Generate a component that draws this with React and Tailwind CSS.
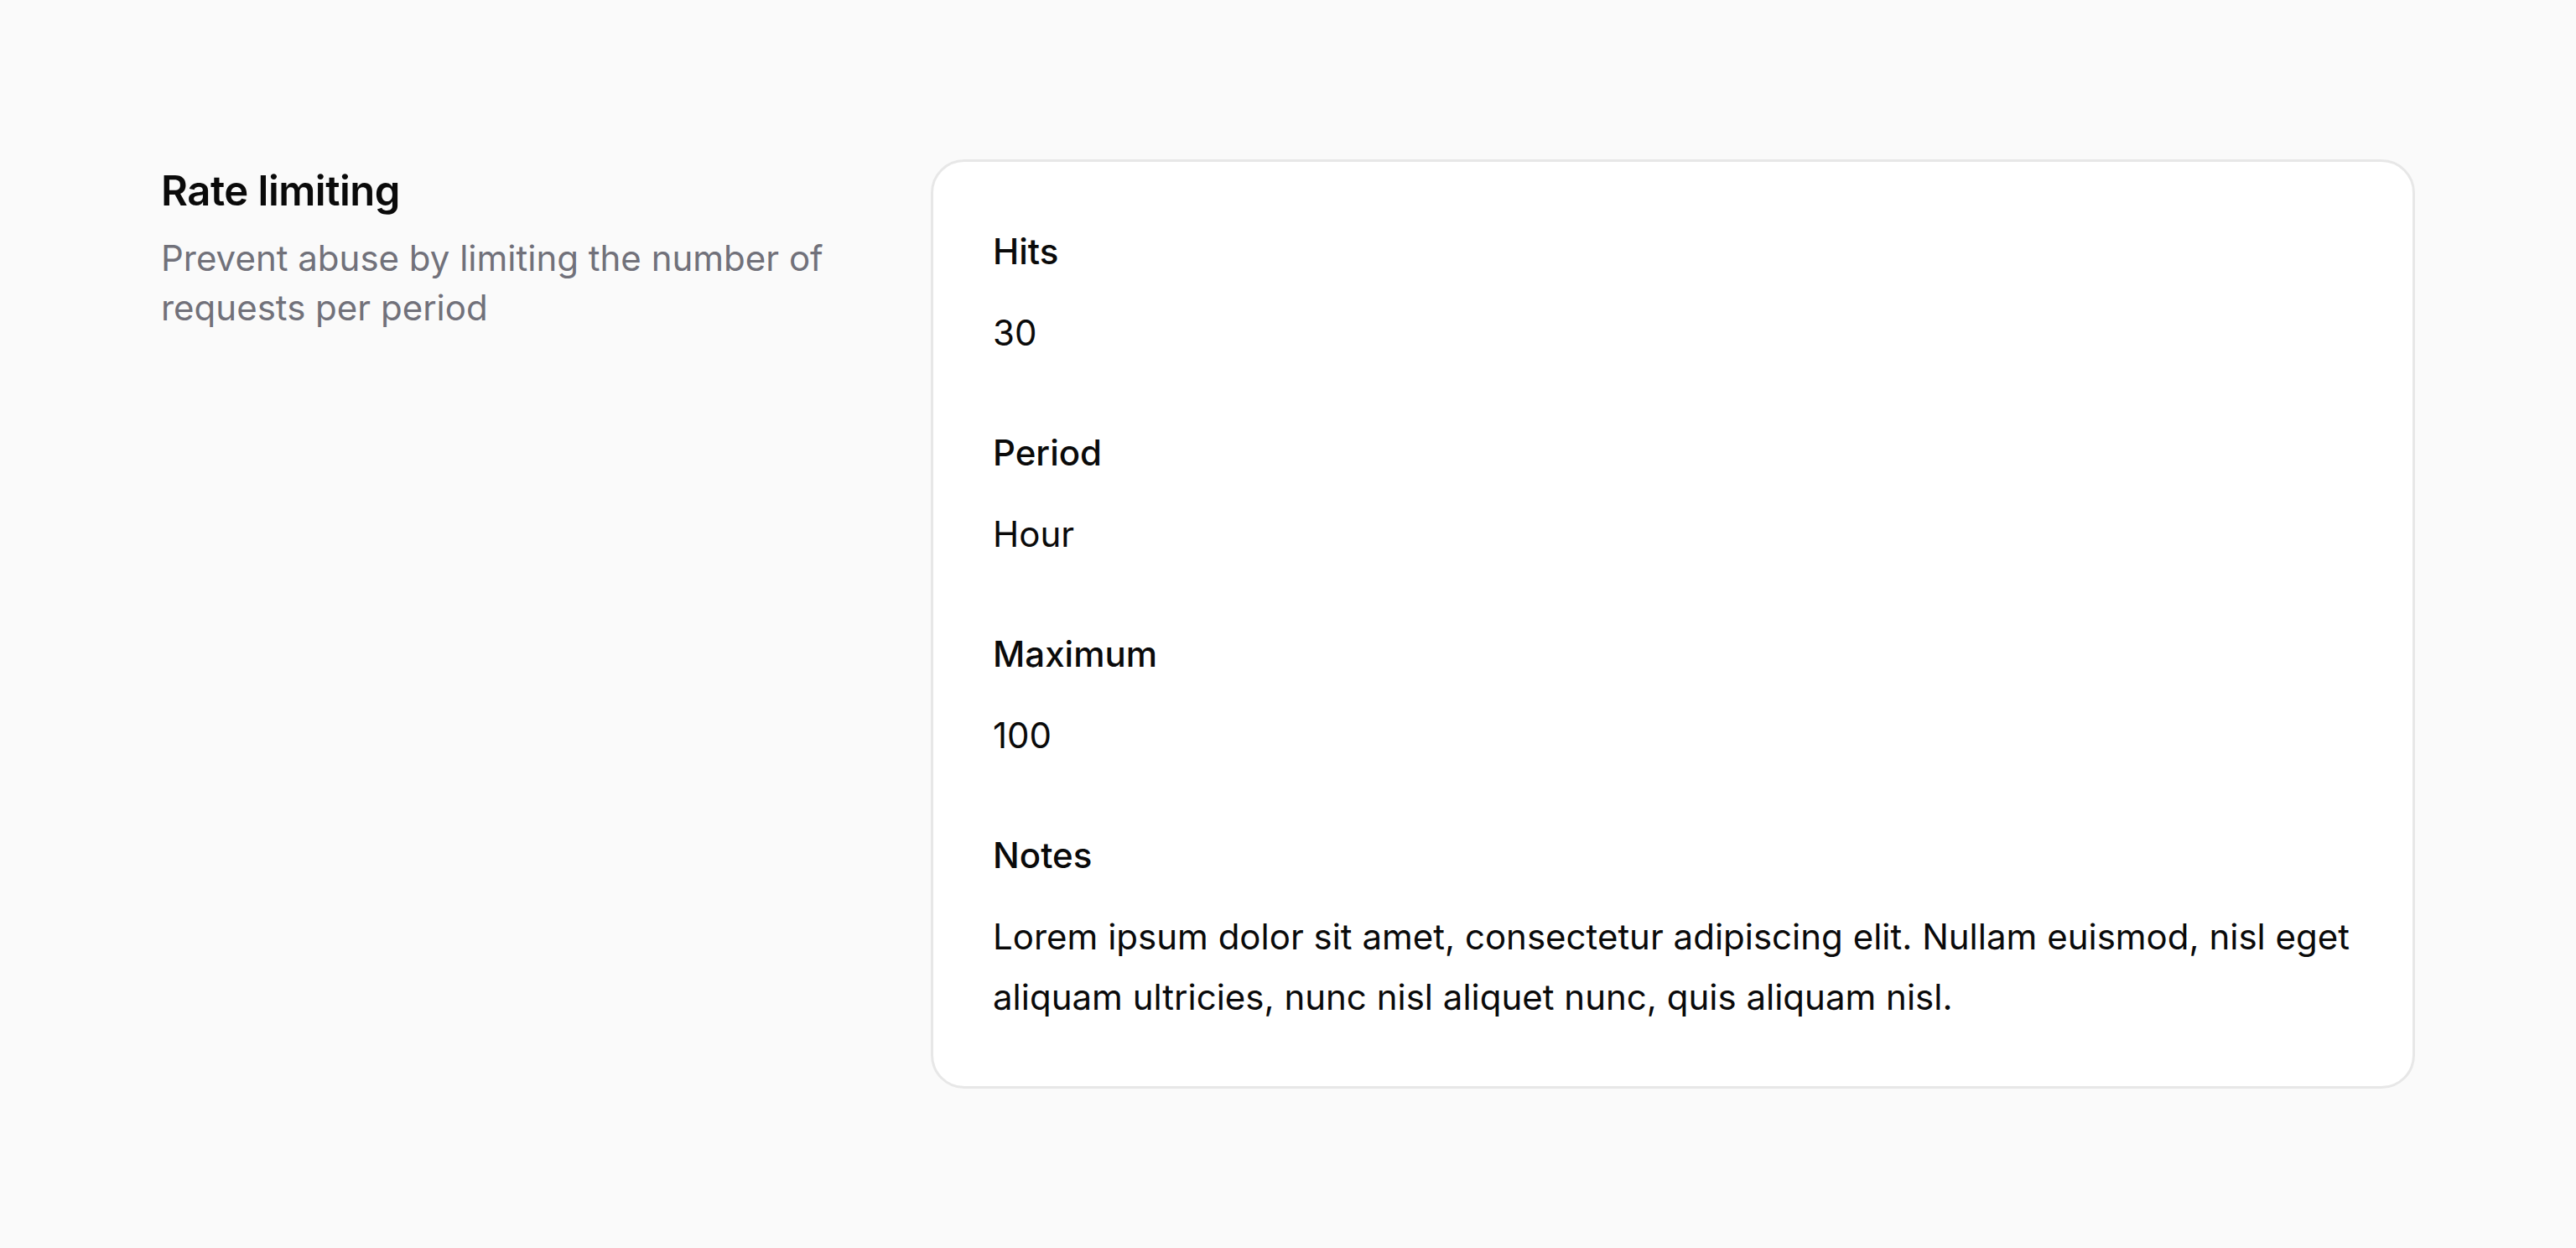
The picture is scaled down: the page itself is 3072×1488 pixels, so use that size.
export default function App() {
  const fields = [
    { label: 'Hits', value: '30' },
    { label: 'Period', value: 'Hour' },
    { label: 'Maximum', value: '100' },
    {
      label: 'Notes',
      value:
        'Lorem ipsum dolor sit amet, consectetur adipiscing elit. Nullam euismod, nisl eget aliquam ultricies, nunc nisl aliquet nunc, quis aliquam nisl.',
    },
  ];

  return (
    <div
      className="min-h-screen w-full bg-[#fafafa] text-[#0a0a0a]"
      style={{ fontFamily: 'Inter, "Noto Sans", sans-serif' }}
    >
      <div className="flex items-start pt-[190px] pl-[192px]">
        {/* Section heading */}
        <div className="w-[820px] shrink-0">
          <h2 className="pt-[2px] text-[49px] leading-[72px] font-semibold tracking-[-0.01em]">Rate limiting</h2>
          <p className="mt-[14px] text-[42px] leading-[59px] text-[#71717a]">
            Prevent abuse by limiting the number of requests per period
          </p>
        </div>

        {/* Card */}
        <div className="ml-[98px] w-[1770px] bg-white border-[3px] border-[#e7e7e7] rounded-[40px] pt-[75px] pb-[70px] pl-[71px] pr-[60px]">
          <div className="flex flex-col gap-[75px]">
            {fields.map((f) => (
              <div key={f.label}>
                <div className="text-[42px] leading-[64px] font-medium">{f.label}</div>
                <div className="mt-[29px] text-[42px] leading-[72px]">{f.value}</div>
              </div>
            ))}
          </div>
        </div>
      </div>
    </div>
  );
}
